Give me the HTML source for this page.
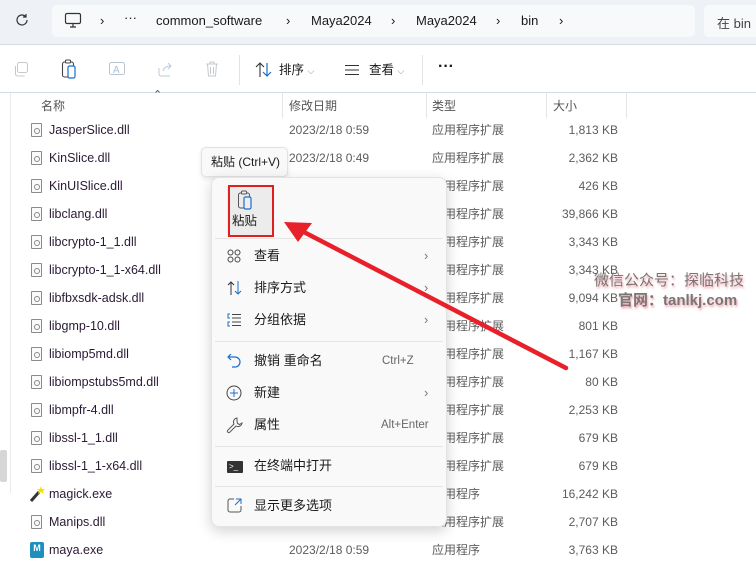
<!DOCTYPE html><html><head><meta charset="utf-8"><style>
*{margin:0;padding:0;box-sizing:border-box}
body{width:756px;height:575px;overflow:hidden;background:#fff;font-family:"Liberation Sans","Noto Sans CJK SC",sans-serif;font-size:12px;color:#1a1a1a;position:relative}
.a{position:absolute;white-space:nowrap}
.top{position:absolute;left:0;top:0;width:756px;height:45px;background:#eef2f7;border-bottom:1px solid #d5dbe3}
.addr{position:absolute;left:52px;top:5px;width:643px;height:32px;background:#f8f9fb;border-radius:5px}
.srch{position:absolute;left:704px;top:5px;width:60px;height:32px;background:#f8f9fb;border-radius:5px}
.row{position:absolute;left:0;height:28px;width:756px;font-size:12.5px;line-height:28px}
.row span{position:absolute;top:0;line-height:28px}
.row .n{left:49px;color:#2a1a35}
.row .d{left:289px;color:#5c5c5c;font-size:12px}
.row .t{left:432px;color:#5c5c5c;font-size:12px}
.row .s{right:138px;color:#5c5c5c;font-size:12px}
.fi{position:absolute;left:31px;top:7px;width:11px;height:14px;border:1px solid #8a8a8a;border-radius:1px;background:#fafafa}
.fi:after{content:"";position:absolute;left:2px;top:4px;width:4px;height:4px;border-radius:50%;border:1px solid #888}
.menu{position:absolute;left:211px;top:177px;width:236px;height:350px;background:#f9f9f9;border-radius:8px;box-shadow:0 4px 14px rgba(0,0,0,.18);border:1px solid #e3e3e3}
.mi{position:absolute;left:42px;font-size:13px;color:#1a1a1a;line-height:18px}
.sep{position:absolute;left:3px;width:228px;height:1px;background:#e5e5e5}
.chev{position:absolute;left:212px;font-size:13px;color:#777;line-height:18px}
.kb{position:absolute;font-size:11.5px;color:#666;line-height:18px}
</style></head><body>
<div class="top"><div class="addr"></div><div class="srch"></div>
<svg class="a" style="left:14px;top:12px" width="16" height="16" viewBox="0 0 16 16"><path d="M13 8a5 5 0 1 1-1.5-3.6M12 2v3h-3" fill="none" stroke="#333" stroke-width="1.2"/></svg>
<svg class="a" style="left:64px;top:12px" width="18" height="16" viewBox="0 0 18 16"><rect x="1.5" y="1.5" width="15" height="10" rx="1.5" fill="none" stroke="#333" stroke-width="1.2"/><path d="M6 15h6M9 12v3" stroke="#333" stroke-width="1.2"/></svg>
<div class="a" style="left:100px;top:13px;font-size:13px">›</div>
<div class="a" style="left:124px;top:10px;font-size:13px">···</div>
<div class="a" style="left:156px;top:13px;font-size:13px">common_software</div>
<div class="a" style="left:286px;top:13px;font-size:13px">›</div>
<div class="a" style="left:311px;top:13px;font-size:13px">Maya2024</div>
<div class="a" style="left:391px;top:13px;font-size:13px">›</div>
<div class="a" style="left:416px;top:13px;font-size:13px">Maya2024</div>
<div class="a" style="left:496px;top:13px;font-size:13px">›</div>
<div class="a" style="left:521px;top:13px;font-size:13px">bin</div>
<div class="a" style="left:559px;top:13px;font-size:13px">›</div>
<div class="a" style="left:717px;top:13px;font-size:13px;color:#444">在 bin</div>
</div>
<svg class="a" style="left:13px;top:61px" width="16" height="16" viewBox="0 0 16 16"><rect x="4.5" y="1.5" width="10" height="10" rx="2" fill="none" stroke="#c4c8cc"/><path d="M2.5 5v8a2 2 0 0 0 2 2h7" fill="none" stroke="#c4c8cc"/></svg>
<svg class="a" style="left:61px;top:59px" width="16" height="20" viewBox="0 0 16 20"><rect x="1.5" y="3" width="11" height="15" rx="2" fill="none" stroke="#444" stroke-width="1.1"/><rect x="4.5" y="1" width="5" height="3" rx="1" fill="#fff" stroke="#444"/><rect x="7" y="7" width="7" height="12" rx="1.5" fill="#fff" stroke="#1a6fc9" stroke-width="1.2"/></svg>
<svg class="a" style="left:108px;top:60px" width="18" height="18" viewBox="0 0 18 18"><rect x="1.5" y="2.5" width="15" height="12" rx="2" fill="none" stroke="#b9c4d0"/><text x="5" y="13" font-size="10" fill="#a6c2de" font-family="Liberation Sans">A</text></svg>
<svg class="a" style="left:157px;top:61px" width="17" height="16" viewBox="0 0 17 16"><path d="M2 7v6a2 2 0 0 0 2 2h9M6 10c1-4 4-5 8-5M11 2l3 3-3 3" fill="none" stroke="#b9c9da"/></svg>
<svg class="a" style="left:205px;top:60px" width="14" height="18" viewBox="0 0 14 18"><path d="M1 4h12M5 4V2h4v2M2.5 4l1 12h7l1-12M5.5 7v7M8.5 7v7" fill="none" stroke="#c4c8cc"/></svg>
<div class="a" style="left:239px;top:55px;width:1px;height:30px;background:#e3e3e3"></div>
<svg class="a" style="left:255px;top:62px" width="18" height="16" viewBox="0 0 18 16"><path d="M5 15V2M1 5l4-4 4 4" fill="none" stroke="#333" stroke-width="1.1"/><path d="M12 1v13M8 10l4 4 4-4" fill="none" stroke="#1a6fc9" stroke-width="1.2"/></svg>
<div class="a" style="left:279px;top:61px;font-size:12.5px;line-height:18px">排序 <span style="font-size:9px;color:#888">⌵</span></div>
<svg class="a" style="left:344px;top:64px" width="16" height="12" viewBox="0 0 16 12"><path d="M1 1.5h14M1 6h14M1 10.5h14" stroke="#333" stroke-width="1.1"/></svg>
<div class="a" style="left:369px;top:61px;font-size:12.5px;line-height:18px">查看 <span style="font-size:9px;color:#888">⌵</span></div>
<div class="a" style="left:422px;top:55px;width:1px;height:30px;background:#e3e3e3"></div>
<div class="a" style="left:438px;top:58px;font-size:16px;font-weight:bold">···</div>
<div class="a" style="left:0;top:92px;width:756px;height:1px;background:#d5dbe3"></div>
<div class="a" style="left:10px;top:93px;width:1px;height:400px;background:#eaeaea"></div>
<div class="a" style="left:0;top:450px;width:7px;height:32px;background:#d6d6d6;border-radius:2px"></div>
<div class="a" style="left:153px;top:88px;font-size:11px;color:#555">⌃</div>
<div class="a" style="left:41px;top:97px;color:#555;line-height:18px">名称</div>
<div class="a" style="left:282px;top:93px;width:1px;height:25px;background:#e5e5e5"></div>
<div class="a" style="left:289px;top:97px;color:#555;line-height:18px">修改日期</div>
<div class="a" style="left:426px;top:93px;width:1px;height:25px;background:#e5e5e5"></div>
<div class="a" style="left:432px;top:97px;color:#555;line-height:18px">类型</div>
<div class="a" style="left:546px;top:93px;width:1px;height:25px;background:#e5e5e5"></div>
<div class="a" style="left:553px;top:97px;color:#555;line-height:18px">大小</div>
<div class="a" style="left:626px;top:93px;width:1px;height:25px;background:#e5e5e5"></div>

<div class="row" style="top:116px"><div class="fi"></div><span class="n">JasperSlice.dll</span><span class="d">2023/2/18 0:59</span><span class="t">应用程序扩展</span><span class="s">1,813 KB</span></div>
<div class="row" style="top:144px"><div class="fi"></div><span class="n">KinSlice.dll</span><span class="d">2023/2/18 0:49</span><span class="t">应用程序扩展</span><span class="s">2,362 KB</span></div>
<div class="row" style="top:172px"><div class="fi"></div><span class="n">KinUISlice.dll</span><span class="t">应用程序扩展</span><span class="s">426 KB</span></div>
<div class="row" style="top:200px"><div class="fi"></div><span class="n">libclang.dll</span><span class="t">应用程序扩展</span><span class="s">39,866 KB</span></div>
<div class="row" style="top:228px"><div class="fi"></div><span class="n">libcrypto-1_1.dll</span><span class="t">应用程序扩展</span><span class="s">3,343 KB</span></div>
<div class="row" style="top:256px"><div class="fi"></div><span class="n">libcrypto-1_1-x64.dll</span><span class="t">应用程序扩展</span><span class="s">3,343 KB</span></div>
<div class="row" style="top:284px"><div class="fi"></div><span class="n">libfbxsdk-adsk.dll</span><span class="t">应用程序扩展</span><span class="s">9,094 KB</span></div>
<div class="row" style="top:312px"><div class="fi"></div><span class="n">libgmp-10.dll</span><span class="t">应用程序扩展</span><span class="s">801 KB</span></div>
<div class="row" style="top:340px"><div class="fi"></div><span class="n">libiomp5md.dll</span><span class="t">应用程序扩展</span><span class="s">1,167 KB</span></div>
<div class="row" style="top:368px"><div class="fi"></div><span class="n">libiompstubs5md.dll</span><span class="t">应用程序扩展</span><span class="s">80 KB</span></div>
<div class="row" style="top:396px"><div class="fi"></div><span class="n">libmpfr-4.dll</span><span class="t">应用程序扩展</span><span class="s">2,253 KB</span></div>
<div class="row" style="top:424px"><div class="fi"></div><span class="n">libssl-1_1.dll</span><span class="t">应用程序扩展</span><span class="s">679 KB</span></div>
<div class="row" style="top:452px"><div class="fi"></div><span class="n">libssl-1_1-x64.dll</span><span class="t">应用程序扩展</span><span class="s">679 KB</span></div>
<div class="row" style="top:480px"><svg style="position:absolute;left:29px;top:5px" width="16" height="18" viewBox="0 0 16 18"><path d="M2 16l8-9" stroke="#333" stroke-width="3"/><path d="M12 1l1 3 3 0-2 2 1 3-3-2-3 2 1-3-2-2 3 0z" fill="#f5e000"/></svg><span class="n">magick.exe</span><span class="t">应用程序</span><span class="s">16,242 KB</span></div>
<div class="row" style="top:508px"><div class="fi"></div><span class="n">Manips.dll</span><span class="t">应用程序扩展</span><span class="s">2,707 KB</span></div>
<div class="row" style="top:536px"><div style="position:absolute;left:30px;top:6px;width:14px;height:16px;background:#1c8fbf;border-radius:2px;color:#fff;font-size:9px;font-weight:bold;text-align:center;line-height:12px">M</div><span class="n">maya.exe</span><span class="d">2023/2/18 0:59</span><span class="t">应用程序</span><span class="s">3,763 KB</span></div>

<div class="a" style="left:594px;top:271px;font-size:15px;line-height:20px;color:#777;text-shadow:1px 2px 2px #f4a0a8">微信公众号：探临科技</div>
<div class="a" style="left:618px;top:291px;font-size:15px;line-height:20px;color:#777;font-weight:bold;text-shadow:1px 2px 2px #f4a0a8">官网：tanlkj.com</div>

<div class="a" style="left:201px;top:147px;width:87px;height:30px;background:#f9f9f9;border:1px solid #e2e2e2;border-radius:5px;box-shadow:0 2px 5px rgba(0,0,0,.1);font-size:12px;line-height:28px;padding-left:9px">粘贴 (Ctrl+V)</div>

<div class="menu">
<div class="a" style="left:15px;top:7px;width:46px;height:52px;background:#ececec;border-radius:4px"></div>
<div class="a" style="left:16px;top:7px;width:46px;height:52px;border:2px solid #e02020"></div>
<svg class="a" style="left:25px;top:12px" width="16" height="20" viewBox="0 0 16 20"><rect x="1.5" y="3" width="11" height="15" rx="2" fill="none" stroke="#555"/><rect x="4.5" y="1" width="5" height="3" rx="1" fill="#eee" stroke="#555"/><rect x="7" y="7" width="7" height="12" rx="1.5" fill="#eee" stroke="#1a6fc9" stroke-width="1.2"/></svg>
<div class="a" style="left:20px;top:34px;font-size:12.5px;line-height:18px">粘贴</div>
<div class="sep" style="top:60px"></div>
<svg class="a" style="left:15px;top:71px" width="14" height="14" viewBox="0 0 14 14" fill="none" stroke="#444"><circle cx="3.5" cy="3.5" r="2.5"/><circle cx="10.5" cy="3.5" r="2.5"/><circle cx="3.5" cy="10.5" r="2.5"/><circle cx="10.5" cy="10.5" r="2.5"/></svg>
<div class="mi" style="top:69px">查看</div><div class="chev" style="top:69px">›</div>
<svg class="a" style="left:15px;top:103px" width="16" height="14" viewBox="0 0 16 14"><path d="M4 14V1M1 4l3-3 3 3" fill="none" stroke="#333"/><path d="M11 0v13M8 10l3 3 3-3" fill="none" stroke="#1a6fc9"/></svg>
<div class="mi" style="top:101px">排序方式</div><div class="chev" style="top:101px">›</div>
<svg class="a" style="left:15px;top:135px" width="14" height="14" viewBox="0 0 14 14" fill="none"><path d="M3 1H1v4h2M3 9H1v4h2" stroke="#1a6fc9"/><path d="M5 1.5h9M5 5h9M5 9h9M5 12.5h9" stroke="#444"/></svg>
<div class="mi" style="top:133px">分组依据</div><div class="chev" style="top:133px">›</div>
<div class="sep" style="top:163px"></div>
<svg class="a" style="left:15px;top:175px" width="15" height="16" viewBox="0 0 15 16"><path d="M4 1L1 4l3 3M1 4h7a5 5 0 0 1 0 10H5" fill="none" stroke="#1a6fc9" stroke-width="1.2"/></svg>
<div class="mi" style="top:174px">撤销 重命名</div><div class="kb" style="left:170px;top:174px">Ctrl+Z</div>
<svg class="a" style="left:14px;top:207px" width="16" height="16" viewBox="0 0 16 16" fill="none" stroke="#444"><circle cx="8" cy="8" r="7"/><path d="M8 4v8M4 8h8" stroke="#1a6fc9"/></svg>
<div class="mi" style="top:206px">新建</div><div class="chev" style="top:206px">›</div>
<svg class="a" style="left:14px;top:239px" width="17" height="17" viewBox="0 0 17 17" fill="none" stroke="#555"><path d="M11 1a4 4 0 0 0-3 6L1.5 13.5a1.5 1.5 0 0 0 2 2L10 9a4 4 0 0 0 6-3l-2.5 1.5-2-1-.5-2.5z"/></svg>
<div class="mi" style="top:238px">属性</div><div class="kb" style="left:169px;top:238px">Alt+Enter</div>
<div class="sep" style="top:268px"></div>
<div class="a" style="left:15px;top:283px;width:16px;height:12px;background:#333;border-radius:1px;color:#fff;font-size:8px;line-height:11px;padding-left:2px">&gt;_</div>
<div class="mi" style="top:279px">在终端中打开</div>
<div class="sep" style="top:308px"></div>
<svg class="a" style="left:15px;top:320px" width="15" height="15" viewBox="0 0 15 15" fill="none"><path d="M7 1H3a2 2 0 0 0-2 2v9a2 2 0 0 0 2 2h9a2 2 0 0 0 2-2V8" stroke="#555"/><path d="M9 1h5v5M14 1L8 7" stroke="#1a6fc9"/></svg>
<div class="mi" style="top:319px">显示更多选项</div>
</div>

<svg class="a" style="left:0;top:0" width="756" height="575"><line x1="566" y1="368" x2="300" y2="230" stroke="#e8202a" stroke-width="4.5" stroke-linecap="round"/><polygon points="284,222 312,223 298,242" fill="#e8202a"/></svg>
</body></html>
